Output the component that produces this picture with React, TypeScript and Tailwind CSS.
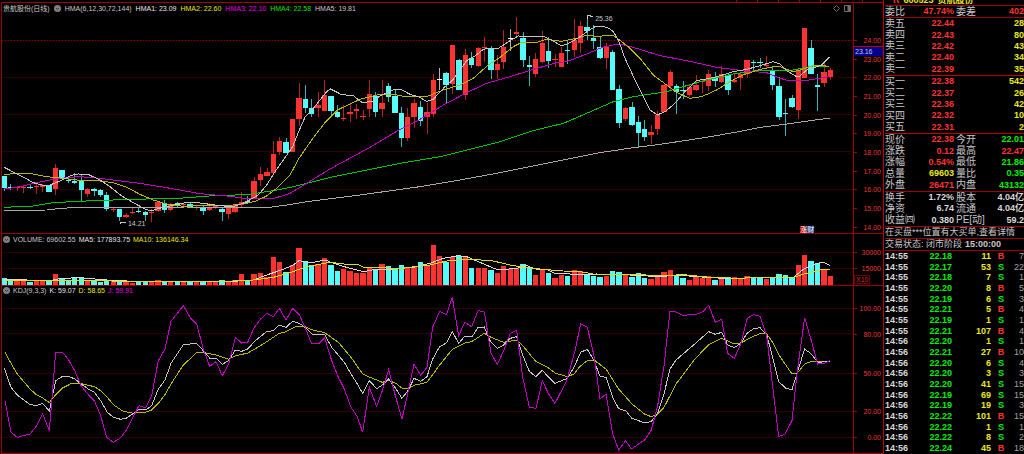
import React from 'react';

// Chart units are thirds of a pixel: [colour, high, body top, body bottom, low, volume]
type Candle = [string, number, number, number, number, number];

const candles: Candle[] = [
  ['c', 527, 527, 563, 572, 20], ['c', 552, 562, 565, 570, 12], ['r', 558, 561, 564, 574, 12], ['r', 557, 562, 564, 578, 14],
  ['c', 556, 561, 564, 567, 9], ['r', 548, 558, 560, 583, 12], ['r', 552, 556, 560, 576, 12], ['c', 555, 556, 575, 576, 13],
  ['r', 493, 503, 567, 584, 34], ['c', 510, 511, 535, 540, 20], ['c', 530, 539, 542, 550, 16], ['c', 520, 543, 548, 552, 23],
  ['c', 524, 543, 570, 605, 23], ['r', 563, 567, 582, 592, 12], ['c', 563, 567, 573, 588, 15], ['c', 568, 570, 585, 592, 10],
  ['c', 575, 586, 627, 632, 15], ['r', 625, 627, 630, 636, 12], ['c', 626, 627, 651, 662, 14], ['r', 638, 646, 651, 655, 8],
  ['r', 622, 635, 639, 642, 7], ['c', 625, 632, 635, 638, 10], ['c', 632, 636, 645, 664, 12], ['r', 626, 636, 639, 665, 10],
  ['r', 603, 607, 633, 637, 14], ['c', 600, 608, 629, 640, 12], ['r', 610, 615, 630, 632, 13], ['c', 607, 610, 616, 620, 9],
  ['r', 608, 611, 615, 619, 13], ['c', 609, 612, 620, 624, 13], ['r', 618, 620, 623, 630, 13], ['c', 618, 624, 633, 645, 9],
  ['r', 608, 625, 629, 632, 12], ['r', 614, 617, 621, 626, 12], ['c', 620, 626, 635, 664, 15], ['r', 615, 625, 641, 657, 13],
  ['r', 611, 615, 635, 638, 14], ['r', 576, 607, 615, 622, 34], ['c', 588, 604, 608, 612, 14], ['r', 530, 543, 598, 598, 34],
  ['r', 502, 522, 540, 557, 35], ['r', 505, 516, 527, 529, 23], ['r', 423, 462, 518, 520, 84], ['r', 412, 423, 455, 465, 68],
  ['c', 413, 427, 458, 460, 40], ['r', 357, 358, 455, 455, 60], ['r', 248, 294, 357, 378, 111], ['c', 255, 298, 324, 340, 73],
  ['c', 298, 324, 342, 352, 60], ['r', 275, 315, 325, 350, 62], ['r', 240, 285, 332, 333, 80], ['c', 287, 289, 332, 351, 60],
  ['c', 314, 336, 350, 353, 43], ['r', 314, 354, 357, 364, 47], ['r', 310, 336, 343, 366, 42], ['r', 312, 327, 333, 357, 37],
  ['r', 330, 348, 351, 360, 36], ['r', 240, 282, 327, 350, 54], ['c', 275, 288, 335, 352, 45], ['r', 240, 309, 327, 350, 62],
  ['c', 250, 257, 290, 305, 58], ['c', 270, 288, 338, 340, 47], ['c', 322, 339, 414, 440, 60], ['r', 325, 351, 414, 424, 55],
  ['r', 298, 309, 352, 385, 54], ['c', 303, 321, 362, 378, 68], ['r', 310, 335, 352, 403, 58], ['r', 222, 240, 342, 352, 119],
  ['w', 204, 237, 239, 270, 88], ['c', 216, 219, 256, 308, 69], ['r', 135, 135, 252, 281, 85], ['c', 178, 180, 269, 269, 88],
  ['r', 147, 164, 285, 300, 86], ['c', 155, 174, 195, 204, 50], ['r', 140, 143, 198, 201, 50], ['r', 110, 142, 144, 187, 50],
  ['c', 138, 143, 210, 237, 44], ['r', 165, 192, 210, 236, 35], ['r', 90, 141, 185, 208, 56], ['w', 87, 115, 117, 152, 48],
  ['r', 52, 97, 101, 112, 50], ['c', 97, 113, 180, 201, 62], ['c', 168, 195, 202, 257, 52], ['r', 159, 177, 222, 232, 30],
  ['r', 92, 128, 185, 190, 46], ['c', 111, 153, 183, 203, 36], ['r', 163, 178, 180, 200, 21], ['r', 140, 158, 200, 202, 30],
  ['c', 122, 150, 153, 192, 26], ['r', 57, 120, 150, 172, 44], ['r', 63, 78, 129, 160, 42], ['c', 50, 80, 93, 120, 34],
  ['c', 75, 114, 122, 146, 28], ['c', 110, 142, 175, 178, 24], ['r', 128, 137, 175, 207, 27], ['c', 150, 157, 270, 270, 42],
  ['c', 255, 267, 370, 383, 40], ['r', 320, 323, 357, 362, 34], ['c', 306, 321, 374, 378, 24], ['c', 348, 366, 400, 441, 36],
  ['c', 360, 387, 411, 422, 21], ['r', 375, 396, 405, 432, 18], ['r', 333, 345, 387, 405, 27], ['r', 250, 255, 335, 336, 40],
  ['r', 210, 216, 258, 273, 44], ['c', 252, 258, 276, 342, 27], ['c', 243, 270, 274, 298, 21], ['r', 255, 260, 286, 290, 16],
  ['r', 225, 255, 269, 272, 24], ['r', 240, 243, 247, 280, 21], ['r', 209, 222, 258, 274, 27], ['c', 216, 233, 243, 260, 15],
  ['r', 198, 221, 246, 250, 22], ['c', 222, 225, 269, 285, 24], ['r', 222, 240, 246, 250, 24], ['r', 215, 221, 234, 270, 19],
  ['r', 180, 181, 222, 234, 27], ['c', 180, 186, 189, 213, 22], ['c', 174, 186, 189, 204, 22], ['r', 168, 195, 198, 207, 18],
  ['c', 200, 213, 255, 270, 20], ['c', 230, 258, 351, 360, 33], ['c', 297, 340, 342, 407, 31], ['c', 284, 294, 321, 324, 24],
  ['r', 205, 210, 330, 357, 59], ['r', 84, 84, 233, 234, 90], ['c', 120, 145, 221, 222, 72], ['c', 222, 256, 260, 333, 66],
  ['r', 185, 216, 250, 262, 48], ['r', 205, 210, 231, 240, 26],
];

const hma = [
  { color: '#a8a8a8', points: '13,631 140,630 180,625 240,622 400,622 560,621 700,624 810,622 860,615 920,605 1000,595 1080,585 1260,560 1380,540 1500,518 1600,498 1700,478 1800,458 1900,443 1980,433 2100,415 2200,398 2280,382 2360,372 2490,354' },
  { color: '#00c800', points: '13,622 100,618 160,608 280,602 400,598 550,594 640,587 740,584 820,572 880,560 960,540 1000,530 1100,510 1200,490 1320,470 1400,450 1500,425 1600,392 1690,370 1760,340 1840,305 1900,290 2000,275 2100,245 2200,222 2260,213 2370,212 2440,198 2488,200' },
  { color: '#c400c4', points: '13,567 60,560 110,548 150,540 200,533 240,530 300,535 420,550 500,563 600,581 680,588 735,595 820,596 870,580 920,550 990,507 1110,442 1200,388 1260,358 1330,315 1400,278 1460,250 1530,230 1600,208 1670,188 1700,185 1760,162 1800,145 1840,135 1865,133 1910,145 1980,167 2060,182 2150,202 2230,212 2300,218 2340,235 2370,243 2420,241 2488,230' },
  { color: '#b8b800', points: '13,523 50,521 100,522 140,530 180,534 230,540 300,543 340,548 380,562 420,583 460,600 500,612 550,619 620,616 700,615 740,610 765,604 800,588 830,565 870,525 897,475 935,420 973,370 1012,330 1050,312 1080,298 1130,285 1180,283 1220,291 1280,290 1330,270 1380,255 1420,235 1465,195 1500,172 1540,140 1565,127 1610,127 1640,118 1685,124 1730,115 1760,105 1790,109 1840,106 1865,125 1890,145 1920,175 1960,225 2000,255 2035,280 2070,295 2105,290 2150,270 2190,245 2230,225 2280,208 2320,200 2340,200 2380,215 2400,210 2440,197 2465,196 2488,200' },
  { color: '#c4c4c4', points: '13,502 32,512 71,532 100,548 129,556 148,556 187,540 215,526 235,522 264,523 300,540 330,560 365,588 400,608 438,629 455,632 477,625 510,618 540,610 575,607 600,609 630,613 660,617 700,620 724,612 745,602 775,585 800,555 825,515 850,480 878,440 897,392 916,350 940,325 960,300 980,275 992,267 1025,284 1060,287 1087,308 1120,303 1140,288 1180,270 1205,269 1230,283 1255,290 1280,304 1300,298 1315,281 1335,260 1358,240 1380,210 1400,182 1425,168 1450,148 1465,145 1495,145 1530,122 1555,108 1630,109 1650,118 1685,138 1710,128 1740,110 1765,92 1785,80 1805,78 1825,84 1840,95 1855,120 1875,175 1905,240 1930,290 1950,330 1972,345 1995,335 2025,310 2055,275 2090,242 2145,232 2200,215 2240,208 2280,197 2320,185 2340,192 2360,212 2390,230 2400,228 2420,210 2450,200 2465,195 2488,172' },
];

const volumeMa = [
  { color: '#d8d8d8', points: '13,838 80,840 150,842 185,835 240,833 320,840 400,844 550,843 700,844 760,840 800,825 850,808 880,795 897,782 935,788 975,780 1010,793 1050,805 1090,815 1130,807 1180,807 1240,802 1290,790 1330,775 1375,767 1400,770 1440,787 1470,800 1495,810 1550,805 1580,797 1610,808 1645,810 1665,820 1730,823 1790,822 1890,825 1980,830 2030,825 2090,830 2170,835 2380,832 2410,808 2450,790 2472,787 2490,797' },
  { color: '#e0e000', points: '13,840 150,842 240,840 400,845 700,843 760,840 820,832 870,818 920,800 990,787 1040,793 1075,794 1090,802 1200,805 1290,795 1340,783 1390,778 1420,778 1480,783 1530,795 1580,803 1630,808 1690,813 1740,815 1780,822 1910,824 1990,827 2050,824 2120,831 2210,835 2290,832 2380,832 2420,820 2460,810 2490,808' },
];

const kdj = [
  { color: '#b8b800', points: '15,205 33,238 52,270 90,315 110,333 128,342 148,356 167,332 188,312 215,298 240,298 283,308 302,320 322,340 340,362 370,382 400,388 437,384 455,378 475,358 495,332 513,300 550,243 590,206 610,206 648,213 686,226 706,216 743,207 782,185 838,148 858,143 878,132 890,127 915,128 934,137 974,146 1015,175 1053,220 1088,270 1110,280 1147,295 1166,290 1186,297 1206,312 1225,313 1242,304 1281,295 1319,243 1357,196 1394,177 1415,173 1453,148 1473,160 1511,175 1550,168 1568,185 1608,233 1646,252 1665,267 1702,278 1722,270 1740,247 1762,230 1782,228 1818,255 1856,315 1896,360 1935,391 1954,398 1973,390 1992,370 2028,300 2085,225 2126,182 2165,163 2183,170 2203,180 2222,177 2260,157 2280,149 2300,150 2318,175 2336,212 2376,270 2392,267 2414,240 2434,232 2489,232' },
  { color: '#c4c4c4', points: '13,253 33,310 52,333 90,362 110,364 128,358 148,381 167,290 188,277 208,278 225,285 243,300 265,315 283,325 302,350 322,385 340,400 362,406 380,402 398,390 417,375 437,378 455,365 475,315 495,288 513,238 550,182 590,178 610,200 629,222 648,222 667,241 686,230 706,198 725,202 743,195 763,173 782,157 800,143 820,140 838,123 858,130 878,112 898,118 915,130 936,150 974,152 995,190 1033,235 1053,270 1072,300 1088,328 1108,290 1130,314 1147,303 1166,285 1186,312 1206,343 1225,318 1242,283 1262,292 1281,278 1298,225 1319,188 1339,177 1357,143 1376,178 1394,157 1417,157 1434,130 1453,129 1470,170 1492,193 1511,183 1531,163 1550,158 1568,213 1588,262 1608,278 1627,259 1646,280 1665,298 1702,283 1722,250 1742,205 1762,196 1782,230 1800,277 1818,280 1838,340 1856,374 1877,380 1896,403 1935,417 1954,412 1973,388 1992,330 2010,255 2028,228 2090,175 2126,143 2146,151 2165,145 2183,183 2203,191 2222,178 2242,147 2260,135 2280,131 2300,152 2318,220 2336,293 2358,313 2376,317 2392,265 2414,195 2434,210 2453,235 2489,232' },
  { color: '#c400c4', points: '15,350 33,445 52,460 90,450 110,425 128,390 148,440 167,205 188,205 206,228 225,262 243,305 265,332 283,350 302,395 320,460 340,475 360,463 378,440 398,402 417,365 437,372 455,335 475,230 495,195 513,112 550,65 572,103 590,120 610,195 629,247 648,233 667,275 686,240 706,160 725,177 743,175 763,130 782,105 800,88 820,98 838,73 858,108 878,73 898,92 915,130 934,177 958,178 974,162 995,230 1015,280 1033,315 1053,370 1072,398 1088,445 1108,310 1130,367 1147,320 1166,257 1186,335 1206,405 1225,320 1242,240 1262,274 1281,250 1298,130 1319,82 1339,92 1357,40 1376,155 1394,115 1415,128 1434,80 1453,84 1473,207 1492,242 1511,200 1531,148 1550,138 1568,280 1588,370 1608,373 1627,290 1646,330 1665,358 1700,290 1725,200 1742,120 1762,130 1782,215 1800,345 1818,330 1838,450 1856,498 1877,470 1894,495 1935,467 1954,438 1973,365 1992,245 2010,82 2025,82 2048,94 2090,91 2110,82 2126,64 2146,115 2165,105 2183,208 2203,223 2222,180 2242,103 2260,92 2280,97 2300,155 2336,458 2355,450 2376,410 2392,260 2414,101 2434,170 2453,240 2472,238 2489,230' },
];

const fills: Record<string, string> = { c: '#54fcfc', r: '#ff3232', w: '#ffffff' };
const candleX = (i: number) => 13 + i * 19.21;

const sells = [['卖五', '22.44', '28'], ['卖四', '22.43', '80'], ['卖三', '22.42', '43'], ['卖二', '22.40', '34'], ['卖一', '22.39', '35']];
const buys = [['买一', '22.38', '542'], ['买二', '22.37', '26'], ['买三', '22.36', '42'], ['买四', '22.32', '10'], ['买五', '22.31', '2']];

const red = 'text-[#ff3232]';
const green = 'text-[#00f000]';
const yellow = 'text-[#e8e820]';
const white = 'text-[#d8d8d8]';

const stats = [
  ['现价', '22.38', red, '今开', '22.01', green],
  ['涨跌', '0.12', red, '最高', '22.47', red],
  ['涨幅', '0.54%', red, '最低', '21.86', green],
  ['总量', '69603', yellow, '量比', '0.35', green],
  ['外盘', '26471', red, '内盘', '43132', green],
];
const basics = [
  ['换手', '1.72%', white, '股本', '4.04亿', white],
  ['净资', '6.74', white, '流通', '4.04亿', white],
  ['收益㈣', '0.380', white, 'PE[动]', '59.2', white],
];

const trades = [
  ['14:55', '22.18', '11', 'B', '7'], ['14:55', '22.17', '53', 'S', '22'], ['14:55', '22.18', '7', 'S', '1'],
  ['14:55', '22.20', '8', 'B', '5'], ['14:55', '22.19', '6', 'S', '3'], ['14:55', '22.21', '5', 'B', '4'],
  ['14:55', '22.19', '1', 'S', '1'], ['14:55', '22.21', '107', 'B', '4'], ['14:56', '22.20', '1', 'S', '1'],
  ['14:56', '22.21', '27', 'B', '10'], ['14:56', '22.20', '6', 'S', '4'], ['14:56', '22.20', '3', 'S', '3'],
  ['14:56', '22.20', '41', 'S', '15'], ['14:56', '22.19', '69', 'S', '15'], ['14:56', '22.19', '19', 'S', '3'],
  ['14:56', '22.22', '101', 'B', '15'], ['14:56', '22.22', '1', 'S', '1'], ['14:56', '22.22', '8', 'S', '2'],
  ['14:56', '22.24', '45', 'B', '18'],
];

const Toggle: React.FC<{ label: string }> = ({ label }) => (
  <button type="button" aria-label={label} className="shrink-0">
    <svg width="7" height="7" viewBox="0 0 14 14">
      <circle cx="7" cy="7" r="7" fill="#808080" />
      <path d="M4 6 L7 9 L10 6" fill="none" stroke="#222" strokeWidth="1.5" />
    </svg>
  </button>
);

const Plot: React.FC<{ box: string; grid: number[]; lines: { color: string; points: string }[]; className: string; children?: React.ReactNode }> = ({ box, grid, lines, className, children }) => (
  <svg viewBox={box} preserveAspectRatio="none" shapeRendering="crispEdges" className={`block w-full ${className}`}>
    {grid.map(y => (
      <line key={y} x1="6" x2="2559" y1={y} y2={y} stroke="#2c0000" vectorEffect="non-scaling-stroke" />
    ))}
    {children}
    {lines.map(l => (
      <polyline key={l.color} points={l.points} fill="none" stroke={l.color} vectorEffect="non-scaling-stroke" />
    ))}
  </svg>
);

const Axis: React.FC<{ top: number; height: number; labels: [number, string][]; children?: React.ReactNode }> = ({ top, height, labels, children }) => (
  <div className="relative w-[30px] shrink-0 border-l border-[#a00000]">
    <svg width="29" height={height} viewBox={`0 ${top} 29 ${height}`} className="block text-[7px]">
      {labels.map(([y, text]) => (
        <g key={text}>
          <line x1="0" x2="3" y1={y + 0.5} y2={y + 0.5} stroke="#a00000" />
          <text x="27" y={y + 3} textAnchor="end" fill="#f03030">{text}</text>
        </g>
      ))}
    </svg>
    {children}
  </div>
);

const StatTable: React.FC<{ rows: string[][]; className: string }> = ({ rows, className }) => (
  <table className={`w-full table-fixed border-b border-[#a00000] ${className}`}>
    <tbody>
      {rows.map(r => (
        <tr key={r[0]}>
          <th scope="row" className="w-[28px] whitespace-nowrap p-0 text-left text-[10px] font-normal">{r[0]}</th>
          <td className={`w-[41px] p-0 text-right font-bold ${r[2]}`}>{r[1]}</td>
          <th scope="row" className="w-[31px] whitespace-nowrap p-0 pl-0.5 text-left text-[10px] font-normal">{r[3]}</th>
          <td className={`whitespace-nowrap p-0 text-right font-bold ${r[5]}`}>{r[4]}</td>
        </tr>
      ))}
    </tbody>
  </table>
);

const QuoteTable: React.FC<{ rows: string[][] }> = ({ rows }) => (
  <table className="h-[58px] w-full table-fixed border-b border-[#c00000]">
    <tbody>
      {rows.map(r => (
        <tr key={r[0]}>
          <th scope="row" className="w-[28px] p-0 text-left text-[10px] font-normal">{r[0]}</th>
          <td className="w-[41px] p-0 text-right font-bold text-[#ff3232]">{r[1]}</td>
          <td className="p-0 text-right font-bold text-[#e8e820]">{r[2]}</td>
        </tr>
      ))}
    </tbody>
  </table>
);

const priceLabels: [number, string][] = [
  [40, '24.00'], [59, '23.00'], [77, '22.00'], [96, '21.00'], [115, '20.00'], [133, '19.00'],
  [152, '18.00'], [171, '17.00'], [189, '16.00'], [208, '15.00'], [227, '14.00'],
];

const App: React.FC = () => {
  return (
    <div className="flex min-h-screen bg-black font-['Liberation_Sans','Noto_Sans_CJK_SC',sans-serif] leading-none text-[#c8c8c8]">
      <main className="flex min-w-0 flex-1 flex-col pl-px text-[7px]">
        <div className="flex h-0.5 justify-end gap-5 pr-5">
          {[0, 1, 2, 3, 4, 5, 6].map(n => <i key={n} className="w-px bg-[#a00000]" />)}
        </div>

        <section className="flex border-y border-l border-[#a00000]">
          <div className="relative min-w-0 flex-1">
            <header className="flex h-[10px] items-center gap-1 whitespace-nowrap pl-px">
              <h1>贵航股份(日线)</h1>
              <Toggle label="HMA" />
              <span>HMA(6,12,30,72,144)</span>
              <span className="text-[#e8e8e8]">HMA1: 23.09</span>
              <span className="text-[#e8e800]">HMA2: 22.60</span>
              <span className="text-[#e800e8]">HMA3: 22.10</span>
              <span className="text-[#00e800]">HMA4: 22.58</span>
              <span>HMA5: 19.81</span>
              <svg width="18" height="7" viewBox="0 0 18 7" fill="none" stroke="#707070" className="ml-auto mr-0.5">
                <path d="M3.5 0.5 L6.5 3.5 L3.5 6.5 L0.5 3.5 Z" />
                <path d="M11.5 0.5 H17.5 V6.5 H11.5 Z" />
                <path d="M15 1 H17 V6 H15 Z" fill="#707070" />
              </svg>
            </header>
            <Plot box="6 39 2553 660" grid={[121, 232, 343, 454, 568]} lines={hma} className="h-[220px]">
              <line x1="6" x2="2559" y1="121" y2="121" stroke="#8c0000" strokeDasharray="1 2" vectorEffect="non-scaling-stroke" />
              {candles.map(([kind, high, top, bottom, low], i) => (
                <g key={i} fill={fills[kind]}>
                  <rect x={candleX(i) - 1} y={high} width="3" height={low - high} fillOpacity="0.7" />
                  <rect x={candleX(i) - 8} y={top} width="16" height={Math.max(bottom - top, 3)} />
                </g>
              ))}
              <path d="M361 672 V666 H378 M1763 57 V45 M1763 45 L1780 51" fill="none" stroke="#c8c8c8" vectorEffect="non-scaling-stroke" />
            </Plot>
            <span className="absolute left-[14.8%] top-[217px]">14.21</span>
            <span className="absolute left-[69.7%] top-[12px]">25.36</span>
            <div className="absolute bottom-0 left-[93.8%] flex text-white">
              <span className="bg-[#b01010]">涨</span>
              <span className="bg-[#1848a0]">财</span>
            </div>
          </div>
          <Axis top={3} height={230} labels={priceLabels}>
            <span className="absolute inset-x-0 top-[43px] h-[10px] border-t border-[#c00000] bg-[#000090] pl-px pt-px">23.16</span>
          </Axis>
        </section>

        <section className="flex border-b border-l border-[#a00000]">
          <div className="min-w-0 flex-1">
            <header className="flex h-[10px] items-center gap-[3px] whitespace-nowrap pl-px">
              <Toggle label="VOLUME" />
              <span>VOLUME: 69602.55</span>
              <span className="text-[#e8e8e8]">MA5: 177893.75</span>
              <span className="text-[#e8e800]">MA10: 136146.34</span>
            </header>
            <Plot box="6 732 2553 123" grid={[757, 805]} lines={volumeMa} className="h-[41px]">
              {candles.map((c, i) => (
                <rect key={i} x={candleX(i) - 8} y={855 - c[5]} width="16" height={c[5]} fill={fills[c[0] === 'w' ? 'r' : c[0]]} />
              ))}
            </Plot>
          </div>
          <Axis top={234} height={51} labels={[[252, '30000'], [268, '15000']]}>
            <span className="absolute bottom-px left-0 border border-[#700000] px-px text-[#d82828]">X10</span>
          </Axis>
        </section>

        <section className="flex border-b border-l border-[#a00000]">
          <div className="min-w-0 flex-1">
            <header className="flex h-2 items-center gap-[3px] whitespace-nowrap pl-px">
              <Toggle label="KDJ" />
              <span>KDJ(9,3,3)</span>
              <span className="text-[#e8e8e8]">K: 59.07</span>
              <span className="text-[#e8e800]">D: 58.65</span>
              <span className="text-[#e800e8]">J: 59.91</span>
            </header>
            <Plot box="6 30 2553 477" grid={[72, 149, 267, 382, 461]} lines={kdj} className="h-[159px]" />
          </div>
          <Axis top={286} height={167} labels={[[308, '100.00'], [334, '80.00'], [373, '50.00'], [411, '20.00'], [437, '0.00']]} />
        </section>
      </main>

      <aside className="flex w-[141px] shrink-0 flex-col border-l border-[#c00000] pl-px text-[9px]">
        <div className="flex h-[6px] items-end gap-1 overflow-hidden border-b border-[#a00000] pl-2 font-bold text-[#e8e820]">
          <span className="text-[#ff3232]">R</span>
          <span>600523</span>
          <span>贵航股份</span>
        </div>
        <StatTable rows={[['委比', '47.74%', red, '委差', '402', red]]} className="h-[12px]" />
        <QuoteTable rows={sells} />
        <QuoteTable rows={buys} />
        <StatTable rows={stats} className="h-[58px]" />
        <StatTable rows={basics} className="h-[35px]" />
        <p className="flex h-[12px] items-center whitespace-nowrap border-b border-[#a00000]">在买盘***位置有大买单,查看详情</p>
        <p className="flex h-[12px] items-center gap-[3px] whitespace-nowrap border-b border-[#a00000]">交易状态: 闭市阶段 <b>15:00:00</b></p>
        <table className="w-full flex-1 table-fixed font-bold">
          <tbody>
            {trades.map(([time, price, lots, side, count], i) => (
              <tr key={i}>
                <td className="w-[28px] p-0 text-[#d8d8d8]">{time}</td>
                <td className="w-[39px] p-0 text-right text-[#00f000]">{price}</td>
                <td className="w-[39px] p-0 text-right text-[#e8e820]">{lots}</td>
                <td className={`w-[20px] p-0 text-center ${side === 'B' ? red : green}`}>{side}</td>
                <td className="p-0 text-right font-normal text-[#a0a0a0]">{count}</td>
              </tr>
            ))}
          </tbody>
        </table>
      </aside>
    </div>
  );
};

export default App;
